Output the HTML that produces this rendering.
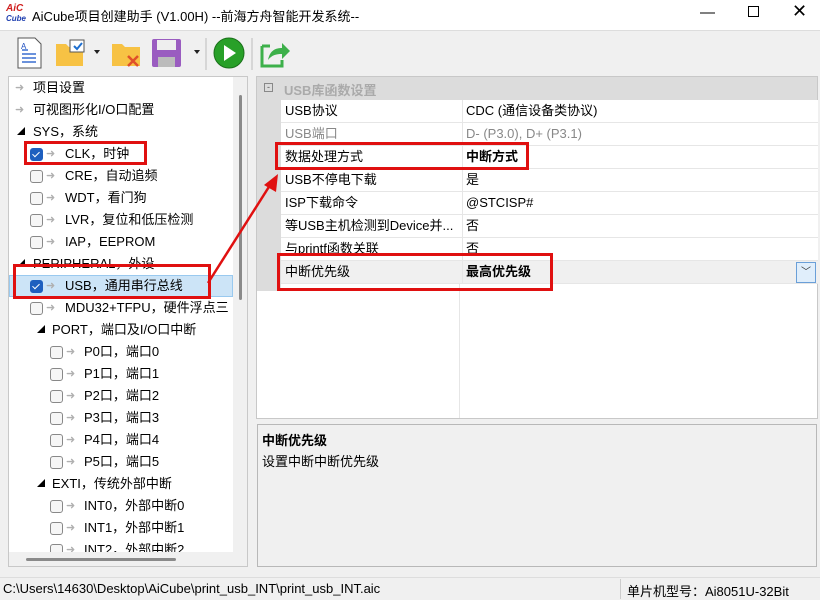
<!DOCTYPE html>
<html><head><meta charset="utf-8"><style>
*{box-sizing:border-box;margin:0;padding:0}
body{width:820px;height:599px;background:#f0f0f0;font-family:"Liberation Sans","Noto Sans CJK SC",sans-serif;font-size:13px;color:#000;position:relative;overflow:hidden}
.a{position:absolute;white-space:nowrap}
.tr{position:absolute;height:22px;line-height:22px}
.cb{position:absolute;width:13px;height:13px;border:1px solid #888;border-radius:3px;background:#f6f6f6;top:5px}
.cb.on{background:#1e5fbf;border-color:#1e5fbf}
.cb.on::after{content:"";position:absolute;left:3px;top:1px;width:3px;height:6px;border:solid #fff;border-width:0 1.5px 1.5px 0;transform:rotate(45deg)}
.ar{position:absolute;color:#b0b0b0;font-size:11px;top:0}
.pr{position:absolute;left:281px;width:537px;height:23px;border-bottom:1px solid #e6e6e6;background:#fff;line-height:22px}
.pr .k{position:absolute;left:4px}
.pr .v{position:absolute;left:181px;border-left:1px solid #e6e6e6;height:23px;padding-left:3px;top:0}
.red{position:absolute;border:3px solid #e01010}
</style></head><body>
<div class="a" style="left:0;top:0;width:820px;height:30px;background:#fff"></div>
<div class="a" style="left:6px;top:4px;color:#d02020;font-size:10px;font-style:italic;font-weight:bold;line-height:10px">AiC<br><span style="color:#2040b0;font-size:8px">Cube</span></div>
<div class="a" style="left:32px;top:6px;font-size:13px">AiCube项目创建助手 (V1.00H) --前海方舟智能开发系统--</div>
<div class="a" style="left:700px;top:4px;font-size:15px">—</div>
<div class="a" style="left:748px;top:6px;width:11px;height:11px;border:1px solid #000"></div>
<div class="a" style="left:792px;top:1px;font-size:18px">✕</div>
<div class="a" style="left:0;top:30px;width:820px;height:44px;background:#f0f0f0;border-top:1px solid #ddd"></div>
<svg class="a" style="left:14px;top:36px" width="300" height="34">
<path d="M4 2h17l6 6v24H4z" fill="#fff" stroke="#555"/><path d="M8 14h6M8 18h14M8 22h14M8 26h14" stroke="#3a6fd0" stroke-width="1.5"/><text x="7" y="13" font-size="8" fill="#2050c0" font-family="Liberation Sans">A</text>
<path d="M42 8h10l3 3h14v19H42z" fill="#f7c244"/><rect x="56" y="4" width="14" height="12" fill="#fff" stroke="#555"/><path d="M60 10l3 3 5-6" stroke="#1e6fd0" stroke-width="2" fill="none"/><path d="M80 14h6l-3 4z" fill="#222"/>
<path d="M98 8h10l3 3h15v19H98z" fill="#f7c244"/><path d="M114 20l10 10M124 20l-10 10" stroke="#e0502a" stroke-width="2.5"/>
<rect x="138" y="3" width="29" height="28" rx="2" fill="#9a5cc0"/><rect x="143" y="4" width="19" height="10" fill="#eee"/><rect x="144" y="21" width="17" height="10" fill="#bbb"/><path d="M180 14h6l-3 4z" fill="#222"/>
<line x1="192" y1="2" x2="192" y2="34" stroke="#bbb"/>
<circle cx="215" cy="17" r="15" fill="#28a028" stroke="#1a701a"/><path d="M210 9l12 8-12 8z" fill="#fff"/>
<line x1="238" y1="2" x2="238" y2="34" stroke="#bbb"/>
<path d="M248 10h8M248 10v20h20v-6" stroke="#3db04a" stroke-width="3" fill="none"/><path d="M254 24c2-10 8-12 14-12v-5l8 8-8 8v-5c-6 0-10 1-14 6z" fill="#3db04a"/>
</svg>
<div class="a" style="left:8px;top:76px;width:240px;height:491px;border:1px solid #c8c8c8;background:#f0f0f0"></div>
<div class="a" style="left:9px;top:77px;width:224px;height:475px;background:#fff;overflow:hidden">
<div class="tr" style="left:0;top:0"><span class="ar" style="left:6px">➜</span><span class="a" style="left:24px">项目设置</span></div>
<div class="tr" style="top:22px"><span class="ar" style="left:6px">➜</span><span class="a" style="left:24px">可视图形化I/O口配置</span></div>
<div class="tr" style="top:44px"><span class="a" style="left:8px;font-size:8px">◢</span><span class="a" style="left:24px">SYS，系统</span></div>
<div class="tr" style="top:66px"><span class="cb on" style="left:21px"></span><span class="ar" style="left:37px">➜</span><span class="a" style="left:56px">CLK，时钟</span></div>
<div class="tr" style="top:88px"><span class="cb" style="left:21px"></span><span class="ar" style="left:37px">➜</span><span class="a" style="left:56px">CRE，自动追频</span></div>
<div class="tr" style="top:110px"><span class="cb" style="left:21px"></span><span class="ar" style="left:37px">➜</span><span class="a" style="left:56px">WDT，看门狗</span></div>
<div class="tr" style="top:132px"><span class="cb" style="left:21px"></span><span class="ar" style="left:37px">➜</span><span class="a" style="left:56px">LVR，复位和低压检测</span></div>
<div class="tr" style="top:154px"><span class="cb" style="left:21px"></span><span class="ar" style="left:37px">➜</span><span class="a" style="left:56px">IAP，EEPROM</span></div>
<div class="tr" style="top:176px"><span class="a" style="left:8px;font-size:8px">◢</span><span class="a" style="left:24px">PERIPHERAL，外设</span></div>
<div class="a" style="left:0;top:198px;width:224px;height:22px;background:#cce4f7;border:1px solid #99c9ef"></div>
<div class="tr" style="top:198px"><span class="cb on" style="left:21px"></span><span class="ar" style="left:37px">➜</span><span class="a" style="left:56px">USB，通用串行总线</span></div>
<div class="tr" style="top:220px"><span class="cb" style="left:21px"></span><span class="ar" style="left:37px">➜</span><span class="a" style="left:56px">MDU32+TFPU，硬件浮点三</span></div>
<div class="tr" style="top:242px"><span class="a" style="left:28px;font-size:8px">◢</span><span class="a" style="left:43px">PORT，端口及I/O口中断</span></div>
<div class="tr" style="top:264px"><span class="cb" style="left:41px"></span><span class="ar" style="left:57px">➜</span><span class="a" style="left:75px">P0口，端口0</span></div>
<div class="tr" style="top:286px"><span class="cb" style="left:41px"></span><span class="ar" style="left:57px">➜</span><span class="a" style="left:75px">P1口，端口1</span></div>
<div class="tr" style="top:308px"><span class="cb" style="left:41px"></span><span class="ar" style="left:57px">➜</span><span class="a" style="left:75px">P2口，端口2</span></div>
<div class="tr" style="top:330px"><span class="cb" style="left:41px"></span><span class="ar" style="left:57px">➜</span><span class="a" style="left:75px">P3口，端口3</span></div>
<div class="tr" style="top:352px"><span class="cb" style="left:41px"></span><span class="ar" style="left:57px">➜</span><span class="a" style="left:75px">P4口，端口4</span></div>
<div class="tr" style="top:374px"><span class="cb" style="left:41px"></span><span class="ar" style="left:57px">➜</span><span class="a" style="left:75px">P5口，端口5</span></div>
<div class="tr" style="top:396px"><span class="a" style="left:28px;font-size:8px">◢</span><span class="a" style="left:43px">EXTI，传统外部中断</span></div>
<div class="tr" style="top:418px"><span class="cb" style="left:41px"></span><span class="ar" style="left:57px">➜</span><span class="a" style="left:75px">INT0，外部中断0</span></div>
<div class="tr" style="top:440px"><span class="cb" style="left:41px"></span><span class="ar" style="left:57px">➜</span><span class="a" style="left:75px">INT1，外部中断1</span></div>
<div class="tr" style="top:462px"><span class="cb" style="left:41px"></span><span class="ar" style="left:57px">➜</span><span class="a" style="left:75px">INT2，外部中断2</span></div>
</div>
<div class="a" style="left:239px;top:95px;width:3px;height:205px;background:#8a8a8a;border-radius:2px"></div>
<div class="a" style="left:26px;top:558px;width:150px;height:3px;background:#8a8a8a;border-radius:2px"></div>
<div class="a" style="left:256px;top:76px;width:562px;height:343px;border:1px solid #c8c8c8;background:#fff"></div>
<div class="a" style="left:257px;top:77px;width:560px;height:23px;background:#dcdcdc"></div>
<div class="a" style="left:257px;top:77px;width:24px;height:214px;background:#dcdcdc"></div>
<div class="a" style="left:264px;top:83px;width:9px;height:9px;border:1px solid #888;font-size:9px;line-height:6px;text-align:center;color:#555">-</div>
<div class="a" style="left:284px;top:80px;color:#aaa;font-weight:bold">USB库函数设置</div>
<div class="pr" style="top:100px"><span class="k">USB协议</span><span class="v">CDC (通信设备类协议)</span></div>
<div class="pr" style="top:123px;color:#888"><span class="k">USB端口</span><span class="v">D- (P3.0), D+ (P3.1)</span></div>
<div class="pr" style="top:146px"><span class="k">数据处理方式</span><span class="v" style="font-weight:bold">中断方式</span></div>
<div class="pr" style="top:169px"><span class="k">USB不停电下载</span><span class="v">是</span></div>
<div class="pr" style="top:192px"><span class="k">ISP下载命令</span><span class="v">@STCISP#</span></div>
<div class="pr" style="top:215px"><span class="k">等USB主机检测到Device并...</span><span class="v">否</span></div>
<div class="pr" style="top:238px"><span class="k">与printf函数关联</span><span class="v">否</span></div>
<div class="pr" style="top:261px;background:#f0f0f0"><span class="k">中断优先级</span><span class="v" style="font-weight:bold">最高优先级</span></div>
<div class="a" style="left:796px;top:262px;width:20px;height:21px;border:1px solid #6a9fd8;background:#e0eefb;font-size:10px;text-align:center;line-height:19px;color:#333">﹀</div>
<div class="a" style="left:459px;top:284px;width:1px;height:134px;background:#e6e6e6"></div>
<div class="a" style="left:257px;top:424px;width:560px;height:143px;border:1px solid #b8b8b8;background:#f0f0f0"></div>
<div class="a" style="left:262px;top:430px;font-weight:bold">中断优先级</div>
<div class="a" style="left:262px;top:451px">设置中断中断优先级</div>
<div class="a" style="left:0;top:577px;width:820px;height:22px;background:#f0f0f0;border-top:1px solid #ddd"></div>
<div class="a" style="left:3px;top:581px">C:\Users\14630\Desktop\AiCube\print_usb_INT\print_usb_INT.aic</div>
<div class="a" style="left:620px;top:579px;width:1px;height:20px;background:#ccc"></div>
<div class="a" style="left:627px;top:581px">单片机型号：Ai8051U-32Bit</div>
<div class="red" style="left:24px;top:141px;width:123px;height:24px"></div>
<div class="red" style="left:13px;top:264px;width:198px;height:35px"></div>
<div class="red" style="left:275px;top:142px;width:254px;height:28px"></div>
<div class="red" style="left:277px;top:253px;width:276px;height:38px"></div>
<svg class="a" style="left:200px;top:170px" width="90" height="120"><line x1="8" y1="113" x2="72" y2="12" stroke="#e01010" stroke-width="2.5"/><path d="M78 4l-2 18-12-7z" fill="#e01010"/></svg>
</body></html>
